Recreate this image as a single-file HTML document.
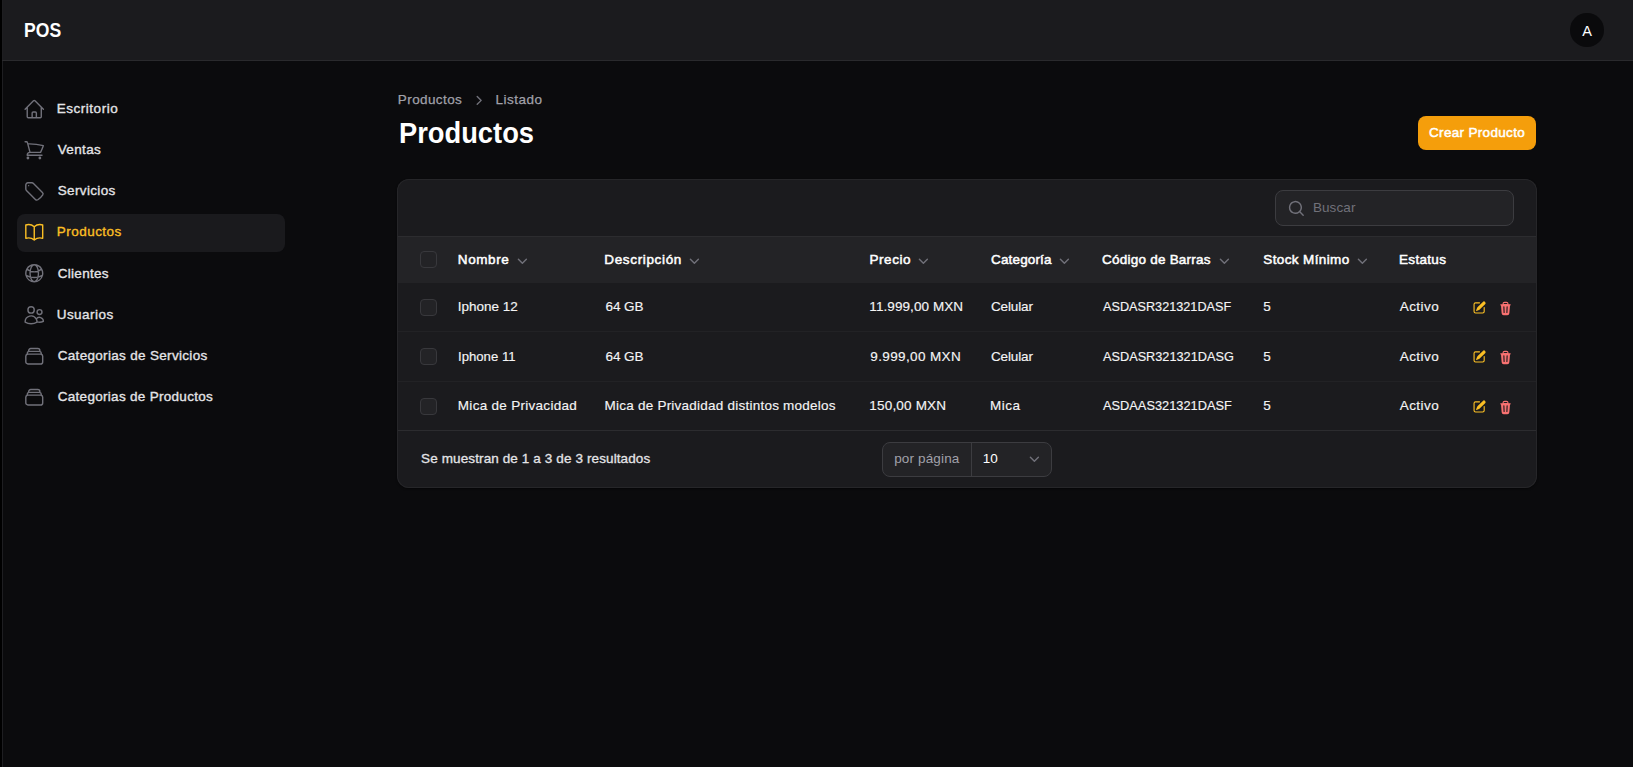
<!DOCTYPE html>
<html><head><meta charset="utf-8"><style>
*{box-sizing:border-box;margin:0;padding:0}
html,body{width:1633px;height:767px;overflow:hidden;background:#0b0b0d;font-family:"Liberation Sans",sans-serif}
.t{position:absolute;white-space:nowrap}
.abs{position:absolute}
.cb{position:absolute;width:17px;height:17px;border-radius:4px;background:#232326;border:1px solid #38383c}
</style></head><body>
<div class="abs" style="left:0;top:0;width:2px;height:767px;background:#000"></div>
<div class="abs" style="left:2px;top:0;width:1px;height:767px;background:#1e1e21"></div>
<div class="abs" style="left:3px;top:0;width:1630px;height:60px;background:#1b1b1e"></div>
<div class="abs" style="left:2px;top:60px;width:1631px;height:1px;background:#2a2a2d"></div>
<div class="abs" style="left:1570.4px;top:13.2px;width:33.4px;height:33.4px;border-radius:50%;background:#0a0a0c"></div>
<div class="abs" style="left:16.5px;top:214px;width:268.5px;height:37.5px;border-radius:8px;background:#1a1a1d"></div>
<div class="abs" style="left:1418px;top:116px;width:118px;height:34px;border-radius:8px;background:#f59e0b"></div>
<div class="abs" style="left:397px;top:179px;width:1140px;height:309px;border-radius:12px;background:#1b1b1e;box-shadow:inset 0 0 0 1px #262629, 0 1px 2px rgba(0,0,0,.5)"></div>
<div class="abs" style="left:1275px;top:190px;width:239px;height:36px;border-radius:8px;background:#232326;border:1px solid #3c3c40"></div>
<div class="abs" style="left:398px;top:236px;width:1138px;height:1px;background:#2c2c2f"></div>
<div class="abs" style="left:398px;top:237px;width:1138px;height:46px;background:#232326"></div>
<div class="abs" style="left:398px;top:331px;width:1138px;height:1px;background:#222225"></div>
<div class="abs" style="left:398px;top:381px;width:1138px;height:1px;background:#222225"></div>
<div class="abs" style="left:398px;top:430px;width:1138px;height:1px;background:#2c2c2f"></div>
<div class="abs" style="left:882px;top:442px;width:170px;height:35px;border-radius:8px;background:#232326;border:1px solid #3c3c40"></div>
<div class="abs" style="left:971px;top:443px;width:1px;height:33px;background:#3c3c40"></div>
<div class="cb" style="left:420px;top:251.2px"></div><div class="cb" style="left:420px;top:299.0px"></div><div class="cb" style="left:420px;top:348.1px"></div><div class="cb" style="left:420px;top:397.9px"></div>
<div class="t" style="left:23.95px;top:20.59px;font-size:19.5px;line-height:19.5px;font-weight:700;color:#ffffff;letter-spacing:0.000px;transform:scaleX(0.9011);transform-origin:0 0;">POS</div>
<div class="t" style="left:1582.20px;top:23.92px;font-size:14.5px;line-height:14.5px;font-weight:400;color:#ffffff;letter-spacing:0.000px;">A</div>
<div class="t" style="left:56.70px;top:102.17px;font-size:13.5px;line-height:13.5px;font-weight:400;color:#e4e4e7;letter-spacing:0.527px;-webkit-text-stroke:0.35px currentColor;">Escritorio</div>
<div class="t" style="left:57.70px;top:143.27px;font-size:13.5px;line-height:13.5px;font-weight:400;color:#e4e4e7;letter-spacing:0.353px;-webkit-text-stroke:0.35px currentColor;">Ventas</div>
<div class="t" style="left:57.70px;top:184.37px;font-size:13.5px;line-height:13.5px;font-weight:400;color:#e4e4e7;letter-spacing:0.361px;-webkit-text-stroke:0.35px currentColor;">Servicios</div>
<div class="t" style="left:56.70px;top:225.47px;font-size:13.5px;line-height:13.5px;font-weight:400;color:#fbbf24;letter-spacing:0.483px;-webkit-text-stroke:0.35px currentColor;">Productos</div>
<div class="t" style="left:57.70px;top:266.57px;font-size:13.5px;line-height:13.5px;font-weight:400;color:#e4e4e7;letter-spacing:0.297px;-webkit-text-stroke:0.35px currentColor;">Clientes</div>
<div class="t" style="left:56.70px;top:307.67px;font-size:13.5px;line-height:13.5px;font-weight:400;color:#e4e4e7;letter-spacing:0.455px;-webkit-text-stroke:0.35px currentColor;">Usuarios</div>
<div class="t" style="left:57.70px;top:348.77px;font-size:13.5px;line-height:13.5px;font-weight:400;color:#e4e4e7;letter-spacing:0.317px;-webkit-text-stroke:0.35px currentColor;">Categorias de Servicios</div>
<div class="t" style="left:57.70px;top:389.87px;font-size:13.5px;line-height:13.5px;font-weight:400;color:#e4e4e7;letter-spacing:0.298px;-webkit-text-stroke:0.35px currentColor;">Categorias de Productos</div>
<div class="t" style="left:397.85px;top:93.07px;font-size:13.5px;line-height:13.5px;font-weight:400;color:#a1a1aa;letter-spacing:0.396px;-webkit-text-stroke:0.25px currentColor;">Productos</div>
<div class="t" style="left:495.40px;top:93.07px;font-size:13.5px;line-height:13.5px;font-weight:400;color:#a1a1aa;letter-spacing:0.496px;-webkit-text-stroke:0.25px currentColor;">Listado</div>
<div class="t" style="left:398.96px;top:118.75px;font-size:29px;line-height:29px;font-weight:700;color:#ffffff;letter-spacing:0.000px;transform:scaleX(0.9414);transform-origin:0 0;">Productos</div>
<div class="t" style="left:1429.00px;top:126.17px;font-size:13.5px;line-height:13.5px;font-weight:400;color:#ffffff;letter-spacing:0.321px;-webkit-text-stroke:0.5px currentColor;">Crear Producto</div>
<div class="t" style="left:1312.90px;top:200.77px;font-size:13.5px;line-height:13.5px;font-weight:400;color:#71717a;letter-spacing:0.096px;">Buscar</div>
<div class="t" style="left:457.80px;top:253.17px;font-size:13.5px;line-height:13.5px;font-weight:400;color:#ffffff;letter-spacing:0.599px;-webkit-text-stroke:0.5px currentColor;">Nombre</div>
<div class="t" style="left:604.30px;top:253.17px;font-size:13.5px;line-height:13.5px;font-weight:400;color:#ffffff;letter-spacing:0.648px;-webkit-text-stroke:0.5px currentColor;">Descripción</div>
<div class="t" style="left:869.40px;top:253.17px;font-size:13.5px;line-height:13.5px;font-weight:400;color:#ffffff;letter-spacing:0.589px;-webkit-text-stroke:0.5px currentColor;">Precio</div>
<div class="t" style="left:991.00px;top:253.17px;font-size:13.5px;line-height:13.5px;font-weight:400;color:#ffffff;letter-spacing:0.153px;-webkit-text-stroke:0.5px currentColor;">Categoría</div>
<div class="t" style="left:1102.00px;top:253.17px;font-size:13.5px;line-height:13.5px;font-weight:400;color:#ffffff;letter-spacing:0.233px;-webkit-text-stroke:0.5px currentColor;">Código de Barras</div>
<div class="t" style="left:1263.30px;top:253.17px;font-size:13.5px;line-height:13.5px;font-weight:400;color:#ffffff;letter-spacing:0.376px;-webkit-text-stroke:0.5px currentColor;">Stock Mínimo</div>
<div class="t" style="left:1399.00px;top:253.17px;font-size:13.5px;line-height:13.5px;font-weight:400;color:#ffffff;letter-spacing:0.321px;-webkit-text-stroke:0.5px currentColor;">Estatus</div>
<div class="t" style="left:457.80px;top:300.17px;font-size:13.5px;line-height:13.5px;font-weight:400;color:#f4f4f5;letter-spacing:-0.019px;-webkit-text-stroke:0.15px currentColor;">Iphone 12</div>
<div class="t" style="left:605.50px;top:300.17px;font-size:13.5px;line-height:13.5px;font-weight:400;color:#f4f4f5;letter-spacing:-0.067px;-webkit-text-stroke:0.15px currentColor;">64 GB</div>
<div class="t" style="left:869.30px;top:300.17px;font-size:13.5px;line-height:13.5px;font-weight:400;color:#f4f4f5;letter-spacing:0.079px;-webkit-text-stroke:0.15px currentColor;">11.999,00 MXN</div>
<div class="t" style="left:991.00px;top:300.17px;font-size:13.5px;line-height:13.5px;font-weight:400;color:#f4f4f5;letter-spacing:-0.145px;-webkit-text-stroke:0.15px currentColor;">Celular</div>
<div class="t" style="left:1102.50px;top:300.17px;font-size:13.5px;line-height:13.5px;font-weight:400;color:#f4f4f5;letter-spacing:0.000px;transform:scaleX(0.9389);transform-origin:0 0;-webkit-text-stroke:0.15px currentColor;">ASDASR321321DASF</div>
<div class="t" style="left:1263.20px;top:300.17px;font-size:13.5px;line-height:13.5px;font-weight:400;color:#f4f4f5;letter-spacing:0.000px;-webkit-text-stroke:0.15px currentColor;">5</div>
<div class="t" style="left:1399.70px;top:300.17px;font-size:13.5px;line-height:13.5px;font-weight:400;color:#f4f4f5;letter-spacing:0.449px;-webkit-text-stroke:0.15px currentColor;">Activo</div>
<div class="t" style="left:457.83px;top:350.17px;font-size:13.5px;line-height:13.5px;font-weight:400;color:#f4f4f5;letter-spacing:0.000px;transform:scaleX(0.9748);transform-origin:0 0;-webkit-text-stroke:0.15px currentColor;">Iphone 11</div>
<div class="t" style="left:605.50px;top:350.17px;font-size:13.5px;line-height:13.5px;font-weight:400;color:#f4f4f5;letter-spacing:-0.067px;-webkit-text-stroke:0.15px currentColor;">64 GB</div>
<div class="t" style="left:870.30px;top:350.17px;font-size:13.5px;line-height:13.5px;font-weight:400;color:#f4f4f5;letter-spacing:0.368px;-webkit-text-stroke:0.15px currentColor;">9.999,00 MXN</div>
<div class="t" style="left:991.00px;top:350.17px;font-size:13.5px;line-height:13.5px;font-weight:400;color:#f4f4f5;letter-spacing:-0.145px;-webkit-text-stroke:0.15px currentColor;">Celular</div>
<div class="t" style="left:1102.50px;top:350.17px;font-size:13.5px;line-height:13.5px;font-weight:400;color:#f4f4f5;letter-spacing:0.000px;transform:scaleX(0.9420);transform-origin:0 0;-webkit-text-stroke:0.15px currentColor;">ASDASR321321DASG</div>
<div class="t" style="left:1263.20px;top:350.17px;font-size:13.5px;line-height:13.5px;font-weight:400;color:#f4f4f5;letter-spacing:0.000px;-webkit-text-stroke:0.15px currentColor;">5</div>
<div class="t" style="left:1399.70px;top:350.17px;font-size:13.5px;line-height:13.5px;font-weight:400;color:#f4f4f5;letter-spacing:0.449px;-webkit-text-stroke:0.15px currentColor;">Activo</div>
<div class="t" style="left:457.80px;top:399.37px;font-size:13.5px;line-height:13.5px;font-weight:400;color:#f4f4f5;letter-spacing:0.292px;-webkit-text-stroke:0.15px currentColor;">Mica de Privacidad</div>
<div class="t" style="left:604.50px;top:399.37px;font-size:13.5px;line-height:13.5px;font-weight:400;color:#f4f4f5;letter-spacing:0.234px;-webkit-text-stroke:0.15px currentColor;">Mica de Privadidad distintos modelos</div>
<div class="t" style="left:869.30px;top:399.37px;font-size:13.5px;line-height:13.5px;font-weight:400;color:#f4f4f5;letter-spacing:0.190px;-webkit-text-stroke:0.15px currentColor;">150,00 MXN</div>
<div class="t" style="left:990.00px;top:399.37px;font-size:13.5px;line-height:13.5px;font-weight:400;color:#f4f4f5;letter-spacing:0.468px;-webkit-text-stroke:0.15px currentColor;">Mica</div>
<div class="t" style="left:1102.50px;top:399.37px;font-size:13.5px;line-height:13.5px;font-weight:400;color:#f4f4f5;letter-spacing:0.000px;transform:scaleX(0.9485);transform-origin:0 0;-webkit-text-stroke:0.15px currentColor;">ASDAAS321321DASF</div>
<div class="t" style="left:1263.20px;top:399.37px;font-size:13.5px;line-height:13.5px;font-weight:400;color:#f4f4f5;letter-spacing:0.000px;-webkit-text-stroke:0.15px currentColor;">5</div>
<div class="t" style="left:1399.70px;top:399.37px;font-size:13.5px;line-height:13.5px;font-weight:400;color:#f4f4f5;letter-spacing:0.449px;-webkit-text-stroke:0.15px currentColor;">Activo</div>
<div class="t" style="left:421.10px;top:451.97px;font-size:13.5px;line-height:13.5px;font-weight:400;color:#e4e4e7;letter-spacing:0.114px;-webkit-text-stroke:0.3px currentColor;">Se muestran de 1 a 3 de 3 resultados</div>
<div class="t" style="left:894.20px;top:452.37px;font-size:13.5px;line-height:13.5px;font-weight:400;color:#a1a1aa;letter-spacing:0.145px;">por página</div>
<div class="t" style="left:982.80px;top:452.37px;font-size:13.5px;line-height:13.5px;font-weight:400;color:#ffffff;letter-spacing:-0.008px;">10</div>
<svg style="position:absolute;left:23.2px;top:97.55px;width:22.5px;height:22.5px;" viewBox="0 0 24 24" fill="none" stroke="#71717a" stroke-width="1.5" stroke-linecap="round" stroke-linejoin="round"><path d="m2.25 12 8.954-8.955c.44-.439 1.152-.439 1.591 0L21.75 12M4.5 9.75v10.125c0 .621.504 1.125 1.125 1.125H9.75v-4.875c0-.621.504-1.125 1.125-1.125h2.25c.621 0 1.125.504 1.125 1.125V21h4.125c.621 0 1.125-.504 1.125-1.125V9.75M8.25 21h8.25"/></svg>
<svg style="position:absolute;left:23.2px;top:138.75px;width:22.5px;height:22.5px;" viewBox="0 0 24 24" fill="none" stroke="#71717a" stroke-width="1.5" stroke-linecap="round" stroke-linejoin="round"><path d="M2.25 3h1.386c.51 0 .955.343 1.087.835l.383 1.437M7.5 14.25a3 3 0 0 0-3 3h15.75m-12.75-3h11.218c1.121-2.3 2.1-4.684 2.924-7.138a60.114 60.114 0 0 0-16.536-1.84M7.5 14.25 5.106 5.272M6 20.25a.75.75 0 1 1-1.5 0 .75.75 0 0 1 1.5 0Zm12.75 0a.75.75 0 1 1-1.5 0 .75.75 0 0 1 1.5 0Z"/></svg>
<svg style="position:absolute;left:23.2px;top:179.95px;width:22.5px;height:22.5px;" viewBox="0 0 24 24" fill="none" stroke="#71717a" stroke-width="1.5" stroke-linecap="round" stroke-linejoin="round"><path d="M9.568 3H5.25A2.25 2.25 0 0 0 3 5.25v4.318c0 .597.237 1.17.659 1.591l9.581 9.581c.699.699 1.78.872 2.607.33a18.095 18.095 0 0 0 5.223-5.223c.542-.827.369-1.908-.33-2.607L11.16 3.66A2.25 2.25 0 0 0 9.568 3Z"/><path d="M6 6h.008v.008H6V6Z"/></svg>
<svg style="position:absolute;left:23.2px;top:221.15px;width:22.5px;height:22.5px;" viewBox="0 0 24 24" fill="none" stroke="#fbbf24" stroke-width="1.5" stroke-linecap="round" stroke-linejoin="round"><path d="M12 6.042A8.967 8.967 0 0 0 6 3.75c-1.052 0-2.062.18-3 .512v14.25A8.987 8.987 0 0 1 6 18c2.305 0 4.408.867 6 2.292m0-14.25a8.966 8.966 0 0 1 6-2.292c1.052 0 2.062.18 3 .512v14.25A8.987 8.987 0 0 0 18 18a8.967 8.967 0 0 0-6 2.292m0-14.25v14.25"/></svg>
<svg style="position:absolute;left:23.2px;top:262.35px;width:22.5px;height:22.5px;" viewBox="0 0 24 24" fill="none" stroke="#71717a" stroke-width="1.5" stroke-linecap="round" stroke-linejoin="round"><path d="M12 21a9.004 9.004 0 0 0 8.716-6.747M12 21a9.004 9.004 0 0 1-8.716-6.747M12 21c2.485 0 4.5-4.03 4.5-9S14.485 3 12 3m0 18c-2.485 0-4.5-4.03-4.5-9S9.515 3 12 3m0 0a8.997 8.997 0 0 1 7.843 4.582M12 3a8.997 8.997 0 0 0-7.843 4.582m15.686 0A11.953 11.953 0 0 1 12 10.5c-2.998 0-5.74-1.1-7.843-2.918m15.686 0A8.959 8.959 0 0 1 21 12c0 .778-.099 1.533-.284 2.253m0 0A17.919 17.919 0 0 1 12 16.5c-3.162 0-6.133-.815-8.716-2.247m0 0A9.015 9.015 0 0 1 3 12c0-1.605.42-3.113 1.157-4.418"/></svg>
<svg style="position:absolute;left:23.2px;top:303.55px;width:22.5px;height:22.5px;" viewBox="0 0 24 24" fill="none" stroke="#71717a" stroke-width="1.5" stroke-linecap="round" stroke-linejoin="round"><path d="M15 19.128a9.38 9.38 0 0 0 2.625.372 9.337 9.337 0 0 0 4.121-.952 4.125 4.125 0 0 0-7.533-2.493M15 19.128v-.003c0-1.113-.285-2.16-.786-3.07M15 19.128v.106A12.318 12.318 0 0 1 8.624 21c-2.331 0-4.512-.645-6.374-1.766l-.001-.109a6.375 6.375 0 0 1 11.964-3.07M12 6.375a3.375 3.375 0 1 1-6.75 0 3.375 3.375 0 0 1 6.75 0Zm8.25 2.25a2.625 2.625 0 1 1-5.25 0 2.625 2.625 0 0 1 5.25 0Z"/></svg>
<svg style="position:absolute;left:23.2px;top:344.75px;width:22.5px;height:22.5px;" viewBox="0 0 24 24" fill="none" stroke="#71717a" stroke-width="1.5" stroke-linecap="round" stroke-linejoin="round"><path d="M6 6.878V6a2.25 2.25 0 0 1 2.25-2.25h7.5A2.25 2.25 0 0 1 18 6v.878m-12 0c.235-.083.487-.128.75-.128h10.5c.263 0 .515.045.75.128m-12 0A2.25 2.25 0 0 0 4.5 9v.878m13.5-3A2.25 2.25 0 0 1 19.5 9v.878m0 0a2.246 2.246 0 0 0-.75-.128H5.25c-.263 0-.515.045-.75.128m15 0A2.25 2.25 0 0 1 21 12v6a2.25 2.25 0 0 1-2.25 2.25H5.25A2.25 2.25 0 0 1 3 18v-6c0-.98.626-1.813 1.5-2.122"/></svg>
<svg style="position:absolute;left:23.2px;top:385.95px;width:22.5px;height:22.5px;" viewBox="0 0 24 24" fill="none" stroke="#71717a" stroke-width="1.5" stroke-linecap="round" stroke-linejoin="round"><path d="M6 6.878V6a2.25 2.25 0 0 1 2.25-2.25h7.5A2.25 2.25 0 0 1 18 6v.878m-12 0c.235-.083.487-.128.75-.128h10.5c.263 0 .515.045.75.128m-12 0A2.25 2.25 0 0 0 4.5 9v.878m13.5-3A2.25 2.25 0 0 1 19.5 9v.878m0 0a2.246 2.246 0 0 0-.75-.128H5.25c-.263 0-.515.045-.75.128m15 0A2.25 2.25 0 0 1 21 12v6a2.25 2.25 0 0 1-2.25 2.25H5.25A2.25 2.25 0 0 1 3 18v-6c0-.98.626-1.813 1.5-2.122"/></svg>
<svg style="position:absolute;left:469.4px;top:91.21px;width:18.75px;height:18.75px" viewBox="0 0 20 20" fill="#71717a"><path fill-rule="evenodd" d="M8.22 5.22a.75.75 0 0 1 1.06 0l4.25 4.25a.75.75 0 0 1 0 1.06l-4.25 4.25a.75.75 0 0 1-1.06-1.06L11.94 10 8.22 6.28a.75.75 0 0 1 0-1.06Z" clip-rule="evenodd"/></svg>
<svg style="position:absolute;left:512.61px;top:250.5px;width:18.75px;height:18.75px" viewBox="0 0 20 20" fill="#71717a"><path fill-rule="evenodd" d="M5.22 8.22a.75.75 0 0 1 1.06 0L10 11.94l3.72-3.72a.75.75 0 1 1 1.06 1.06l-4.25 4.25a.75.75 0 0 1-1.06 0L5.22 9.28a.75.75 0 0 1 0-1.06Z" clip-rule="evenodd"/></svg>
<svg style="position:absolute;left:684.71px;top:250.5px;width:18.75px;height:18.75px" viewBox="0 0 20 20" fill="#71717a"><path fill-rule="evenodd" d="M5.22 8.22a.75.75 0 0 1 1.06 0L10 11.94l3.72-3.72a.75.75 0 1 1 1.06 1.06l-4.25 4.25a.75.75 0 0 1-1.06 0L5.22 9.28a.75.75 0 0 1 0-1.06Z" clip-rule="evenodd"/></svg>
<svg style="position:absolute;left:914.01px;top:250.5px;width:18.75px;height:18.75px" viewBox="0 0 20 20" fill="#71717a"><path fill-rule="evenodd" d="M5.22 8.22a.75.75 0 0 1 1.06 0L10 11.94l3.72-3.72a.75.75 0 1 1 1.06 1.06l-4.25 4.25a.75.75 0 0 1-1.06 0L5.22 9.28a.75.75 0 0 1 0-1.06Z" clip-rule="evenodd"/></svg>
<svg style="position:absolute;left:1055.11px;top:250.5px;width:18.75px;height:18.75px" viewBox="0 0 20 20" fill="#71717a"><path fill-rule="evenodd" d="M5.22 8.22a.75.75 0 0 1 1.06 0L10 11.94l3.72-3.72a.75.75 0 1 1 1.06 1.06l-4.25 4.25a.75.75 0 0 1-1.06 0L5.22 9.28a.75.75 0 0 1 0-1.06Z" clip-rule="evenodd"/></svg>
<svg style="position:absolute;left:1214.81px;top:250.5px;width:18.75px;height:18.75px" viewBox="0 0 20 20" fill="#71717a"><path fill-rule="evenodd" d="M5.22 8.22a.75.75 0 0 1 1.06 0L10 11.94l3.72-3.72a.75.75 0 1 1 1.06 1.06l-4.25 4.25a.75.75 0 0 1-1.06 0L5.22 9.28a.75.75 0 0 1 0-1.06Z" clip-rule="evenodd"/></svg>
<svg style="position:absolute;left:1352.61px;top:250.5px;width:18.75px;height:18.75px" viewBox="0 0 20 20" fill="#71717a"><path fill-rule="evenodd" d="M5.22 8.22a.75.75 0 0 1 1.06 0L10 11.94l3.72-3.72a.75.75 0 1 1 1.06 1.06l-4.25 4.25a.75.75 0 0 1-1.06 0L5.22 9.28a.75.75 0 0 1 0-1.06Z" clip-rule="evenodd"/></svg>
<svg style="position:absolute;left:1286.62px;top:198.82px;width:18.75px;height:18.75px" viewBox="0 0 20 20" fill="#71717a"><path fill-rule="evenodd" d="M9 3.5a5.5 5.5 0 1 0 0 11 5.5 5.5 0 0 0 0-11ZM2 9a7 7 0 1 1 12.452 4.391l3.328 3.329a.75.75 0 1 1-1.06 1.06l-3.329-3.328A7 7 0 0 1 2 9Z" clip-rule="evenodd"/></svg>
<svg style="position:absolute;left:1024.71px;top:449.0px;width:18.75px;height:18.75px" viewBox="0 0 20 20" fill="#71717a"><path fill-rule="evenodd" d="M5.22 8.22a.75.75 0 0 1 1.06 0L10 11.94l3.72-3.72a.75.75 0 1 1 1.06 1.06l-4.25 4.25a.75.75 0 0 1-1.06 0L5.22 9.28a.75.75 0 0 1 0-1.06Z" clip-rule="evenodd"/></svg>
<svg style="position:absolute;left:1472.0px;top:299.7px;width:15px;height:15px" viewBox="0 0 20 20" fill="#fbbf24"><path d="M5.433 13.917l1.262-3.155A4 4 0 0 1 7.58 9.42l6.92-6.918a2.121 2.121 0 0 1 3 3l-6.92 6.918c-.383.383-.84.685-1.343.886l-3.154 1.262a.5.5 0 0 1-.65-.65Z"/><path d="M3.5 5.75c0-.69.56-1.25 1.25-1.25H10A.75.75 0 0 0 10 3H4.75A2.75 2.75 0 0 0 2 5.75v9.5A2.75 2.75 0 0 0 4.75 18h9.5A2.75 2.75 0 0 0 17 15.25V10a.75.75 0 0 0-1.5 0v5.25c0 .69-.56 1.25-1.25 1.25h-9.5c-.69 0-1.25-.56-1.25-1.25v-9.5Z"/></svg>
<svg style="position:absolute;left:1498.12px;top:300.6px;width:15px;height:15px" viewBox="0 0 20 20" fill="#f87171"><path fill-rule="evenodd" d="M8.75 1A2.75 2.75 0 0 0 6 3.75v.443c-.795.077-1.584.176-2.365.298a.75.75 0 1 0 .23 1.482l.149-.022.841 10.518A2.75 2.75 0 0 0 7.596 19h4.807a2.75 2.75 0 0 0 2.742-2.53l.841-10.52.149.023a.75.75 0 0 0 .23-1.482A41.03 41.03 0 0 0 14 4.193V3.75A2.75 2.75 0 0 0 11.25 1h-2.5ZM10 4c.84 0 1.673.025 2.5.075V3.75c0-.69-.56-1.25-1.25-1.25h-2.5c-.69 0-1.25.56-1.25 1.25v.325C8.327 4.025 9.16 4 10 4ZM8.58 7.72a.75.75 0 0 0-1.5.06l.3 7.5a.75.75 0 1 0 1.5-.06l-.3-7.5Zm4.34.06a.75.75 0 1 0-1.5-.06l-.3 7.5a.75.75 0 1 0 1.5.06l.3-7.5Z" clip-rule="evenodd"/></svg>
<svg style="position:absolute;left:1472.0px;top:349.3px;width:15px;height:15px" viewBox="0 0 20 20" fill="#fbbf24"><path d="M5.433 13.917l1.262-3.155A4 4 0 0 1 7.58 9.42l6.92-6.918a2.121 2.121 0 0 1 3 3l-6.92 6.918c-.383.383-.84.685-1.343.886l-3.154 1.262a.5.5 0 0 1-.65-.65Z"/><path d="M3.5 5.75c0-.69.56-1.25 1.25-1.25H10A.75.75 0 0 0 10 3H4.75A2.75 2.75 0 0 0 2 5.75v9.5A2.75 2.75 0 0 0 4.75 18h9.5A2.75 2.75 0 0 0 17 15.25V10a.75.75 0 0 0-1.5 0v5.25c0 .69-.56 1.25-1.25 1.25h-9.5c-.69 0-1.25-.56-1.25-1.25v-9.5Z"/></svg>
<svg style="position:absolute;left:1498.12px;top:350.2px;width:15px;height:15px" viewBox="0 0 20 20" fill="#f87171"><path fill-rule="evenodd" d="M8.75 1A2.75 2.75 0 0 0 6 3.75v.443c-.795.077-1.584.176-2.365.298a.75.75 0 1 0 .23 1.482l.149-.022.841 10.518A2.75 2.75 0 0 0 7.596 19h4.807a2.75 2.75 0 0 0 2.742-2.53l.841-10.52.149.023a.75.75 0 0 0 .23-1.482A41.03 41.03 0 0 0 14 4.193V3.75A2.75 2.75 0 0 0 11.25 1h-2.5ZM10 4c.84 0 1.673.025 2.5.075V3.75c0-.69-.56-1.25-1.25-1.25h-2.5c-.69 0-1.25.56-1.25 1.25v.325C8.327 4.025 9.16 4 10 4ZM8.58 7.72a.75.75 0 0 0-1.5.06l.3 7.5a.75.75 0 1 0 1.5-.06l-.3-7.5Zm4.34.06a.75.75 0 1 0-1.5-.06l-.3 7.5a.75.75 0 1 0 1.5.06l.3-7.5Z" clip-rule="evenodd"/></svg>
<svg style="position:absolute;left:1472.0px;top:398.9px;width:15px;height:15px" viewBox="0 0 20 20" fill="#fbbf24"><path d="M5.433 13.917l1.262-3.155A4 4 0 0 1 7.58 9.42l6.92-6.918a2.121 2.121 0 0 1 3 3l-6.92 6.918c-.383.383-.84.685-1.343.886l-3.154 1.262a.5.5 0 0 1-.65-.65Z"/><path d="M3.5 5.75c0-.69.56-1.25 1.25-1.25H10A.75.75 0 0 0 10 3H4.75A2.75 2.75 0 0 0 2 5.75v9.5A2.75 2.75 0 0 0 4.75 18h9.5A2.75 2.75 0 0 0 17 15.25V10a.75.75 0 0 0-1.5 0v5.25c0 .69-.56 1.25-1.25 1.25h-9.5c-.69 0-1.25-.56-1.25-1.25v-9.5Z"/></svg>
<svg style="position:absolute;left:1498.12px;top:399.8px;width:15px;height:15px" viewBox="0 0 20 20" fill="#f87171"><path fill-rule="evenodd" d="M8.75 1A2.75 2.75 0 0 0 6 3.75v.443c-.795.077-1.584.176-2.365.298a.75.75 0 1 0 .23 1.482l.149-.022.841 10.518A2.75 2.75 0 0 0 7.596 19h4.807a2.75 2.75 0 0 0 2.742-2.53l.841-10.52.149.023a.75.75 0 0 0 .23-1.482A41.03 41.03 0 0 0 14 4.193V3.75A2.75 2.75 0 0 0 11.25 1h-2.5ZM10 4c.84 0 1.673.025 2.5.075V3.75c0-.69-.56-1.25-1.25-1.25h-2.5c-.69 0-1.25.56-1.25 1.25v.325C8.327 4.025 9.16 4 10 4ZM8.58 7.72a.75.75 0 0 0-1.5.06l.3 7.5a.75.75 0 1 0 1.5-.06l-.3-7.5Zm4.34.06a.75.75 0 1 0-1.5-.06l-.3 7.5a.75.75 0 1 0 1.5.06l.3-7.5Z" clip-rule="evenodd"/></svg>
</body></html>
